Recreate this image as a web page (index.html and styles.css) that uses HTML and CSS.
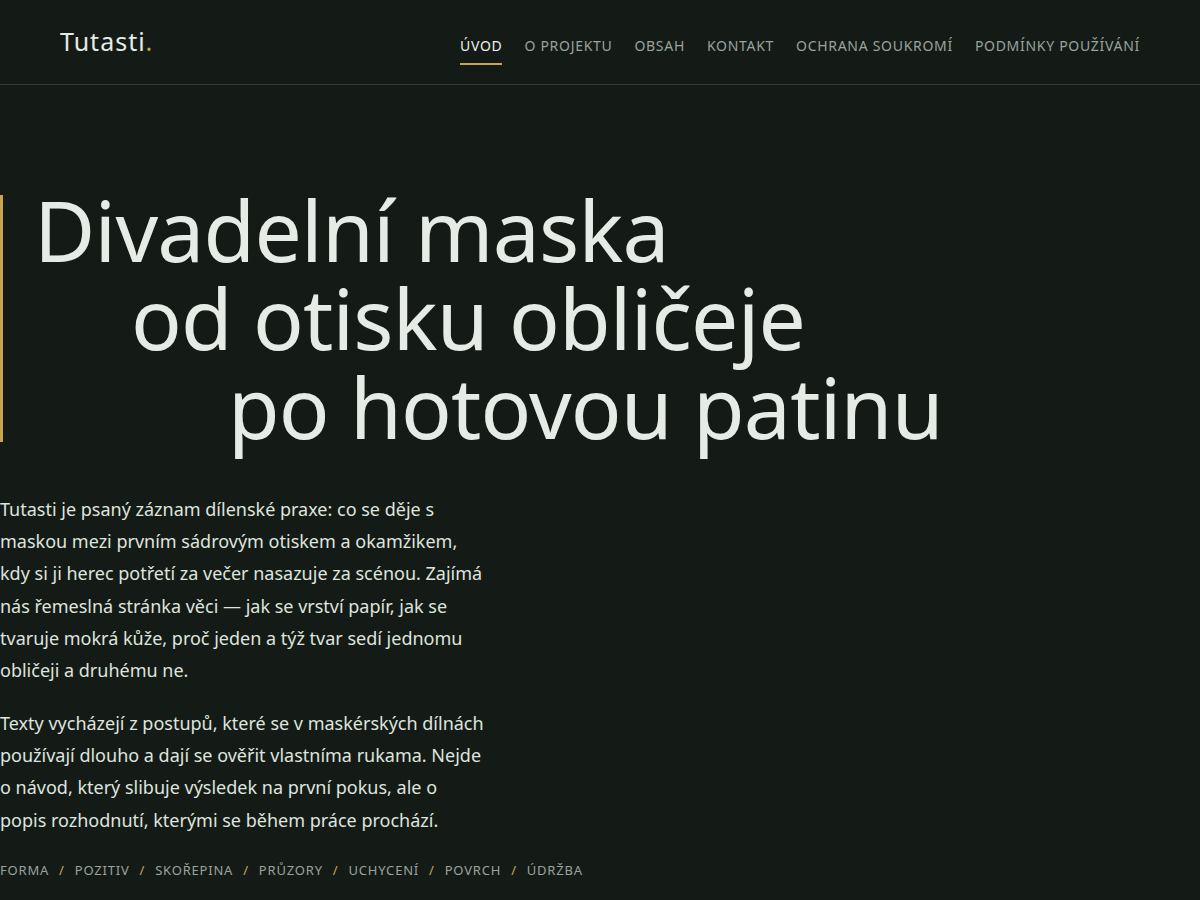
FILE: index.html
```html
<!DOCTYPE html>
<html lang="cs">
<head>
<meta charset="utf-8">
<title>Tutasti</title>
<link rel="stylesheet" href="styles.css">
</head>
<body>
<header class="site-header">
  <a class="logo" href="#">Tutasti<span class="dot">.</span></a>
  <nav class="main-nav">
    <a class="active" href="#">Úvod</a>
    <a href="#">O projektu</a>
    <a href="#">Obsah</a>
    <a href="#">Kontakt</a>
    <a href="#">Ochrana soukromí</a>
    <a href="#">Podmínky používání</a>
  </nav>
</header>
<main class="content">
  <h1 class="hero-title">
    <span class="l1">Divadelní maska</span>
    <span class="l2">od otisku obličeje</span>
    <span class="l3">po hotovou patinu</span>
  </h1>
  <div class="intro">
    <p>Tutasti je psaný záznam dílenské praxe: co se děje s maskou mezi prvním sádrovým otiskem a okamžikem, kdy si ji herec potřetí za večer nasazuje za scénou. Zajímá nás řemeslná stránka věci — jak se vrství papír, jak se tvaruje mokrá kůže, proč jeden a týž tvar sedí jednomu obličeji a druhému ne.</p>
    <p>Texty vycházejí z postupů, které se v maskérských dílnách používají dlouho a dají se ověřit vlastníma rukama. Nejde o návod, který slibuje výsledek na první pokus, ale o popis rozhodnutí, kterými se během práce prochází.</p>
  </div>
  <nav class="topics">
    <a href="#">Forma</a><span class="sep">/</span>
    <a href="#">Pozitiv</a><span class="sep">/</span>
    <a href="#">Skořepina</a><span class="sep">/</span>
    <a href="#">Průzory</a><span class="sep">/</span>
    <a href="#">Uchycení</a><span class="sep">/</span>
    <a href="#">Povrch</a><span class="sep">/</span>
    <a href="#">Údržba</a>
  </nav>
</main>
</body>
</html>
```
FILE: styles.css
```css
* { box-sizing: border-box; }
html, body { margin: 0; padding: 0; }
body {
  background: #141b17;
  color: #e6ebe5;
  font-family: "Noto Sans", "Open Sans", sans-serif;
  height: 900px;
  overflow: hidden;
}
a { color: inherit; text-decoration: none; }

.site-header {
  display: flex;
  align-items: center;
  justify-content: space-between;
  height: 85px;
  padding: 0 60px;
  border-bottom: 1px solid #343c37;
}
.logo {
  font-size: 25px;
  letter-spacing: 1px;
  color: #e6ebe5;
  margin-top: -2px;
}
.logo .dot { color: #c9a64e; }

.main-nav {
  display: flex;
  gap: 22px;
  align-self: stretch;
  align-items: center;
}
.main-nav a {
  font-size: 14px;
  text-transform: uppercase;
  letter-spacing: 0.7px;
  color: #9aa39d;
  padding: 6px 0 8px;
  border-bottom: 2px solid transparent;
  margin-top: 10px;
}
.main-nav a.active {
  color: #eef1ec;
  border-bottom-color: #c9a64e;
}

.content {
  padding-top: 101px;
}
.hero-title {
  position: relative;
  margin: 0;
  font-weight: 400;
  font-size: 84px;
  line-height: 88.3px;
  letter-spacing: -0.8px;
  color: #e6ebe5;
  padding: 0 0 0 34px;
  display: flex;
  flex-direction: column;
  align-items: flex-start;
}
.hero-title::before {
  content: "";
  position: absolute;
  left: 0;
  top: 9px;
  bottom: 9px;
  width: 3px;
  background: #c9a64e;
}
.hero-title .l2 { padding-left: 97px; }
.hero-title .l3 { padding-left: 194px; }

.intro {
  width: 486px;
  margin-top: 42px;
}
.intro p {
  margin: 0 0 20px;
  font-size: 18px;
  line-height: 32.3px;
  color: #dfe4de;
}
.topics {
  margin-top: 25px;
  font-size: 13px;
  letter-spacing: 0.8px;
  text-transform: uppercase;
  color: #9aa39d;
  display: flex;
  gap: 10px;
}
.topics .sep { color: #c9a64e; }
```
